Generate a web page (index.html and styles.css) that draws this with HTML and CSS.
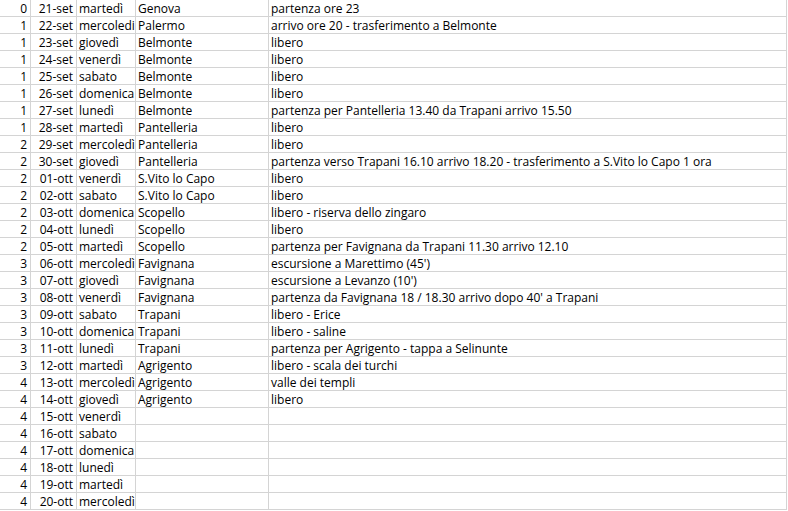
FILE: index.html
```html
<!DOCTYPE html>
<html lang="it">
<head>
<meta charset="utf-8">
<title>Itinerario</title>
<link rel="stylesheet" href="styles.css">
</head>
<body>
<div class="sheet">
<div class="row"><div class="c n">0</div><div class="c d">21-set</div><div class="c t">martedì</div><div class="c t">Genova</div><div class="c t">partenza ore 23</div></div>
<div class="row"><div class="c n">1</div><div class="c d">22-set</div><div class="c t">mercoledi</div><div class="c t">Palermo</div><div class="c t">arrivo ore 20 - trasferimento a Belmonte</div></div>
<div class="row"><div class="c n">1</div><div class="c d">23-set</div><div class="c t">giovedì</div><div class="c t">Belmonte</div><div class="c t">libero</div></div>
<div class="row"><div class="c n">1</div><div class="c d">24-set</div><div class="c t">venerdì</div><div class="c t">Belmonte</div><div class="c t">libero</div></div>
<div class="row"><div class="c n">1</div><div class="c d">25-set</div><div class="c t">sabato</div><div class="c t">Belmonte</div><div class="c t">libero</div></div>
<div class="row"><div class="c n">1</div><div class="c d">26-set</div><div class="c t">domenica</div><div class="c t">Belmonte</div><div class="c t">libero</div></div>
<div class="row"><div class="c n">1</div><div class="c d">27-set</div><div class="c t">lunedì</div><div class="c t">Belmonte</div><div class="c t">partenza per Pantelleria 13.40 da Trapani arrivo 15.50</div></div>
<div class="row"><div class="c n">1</div><div class="c d">28-set</div><div class="c t">martedì</div><div class="c t">Pantelleria</div><div class="c t">libero</div></div>
<div class="row"><div class="c n">2</div><div class="c d">29-set</div><div class="c t">mercoledì</div><div class="c t">Pantelleria</div><div class="c t">libero</div></div>
<div class="row"><div class="c n">2</div><div class="c d">30-set</div><div class="c t">giovedì</div><div class="c t">Pantelleria</div><div class="c t">partenza verso Trapani 16.10 arrivo 18.20 - trasferimento a S.Vito lo Capo 1 ora</div></div>
<div class="row"><div class="c n">2</div><div class="c d">01-ott</div><div class="c t">venerdì</div><div class="c t">S.Vito lo Capo</div><div class="c t">libero</div></div>
<div class="row"><div class="c n">2</div><div class="c d">02-ott</div><div class="c t">sabato</div><div class="c t">S.Vito lo Capo</div><div class="c t">libero</div></div>
<div class="row"><div class="c n">2</div><div class="c d">03-ott</div><div class="c t">domenica</div><div class="c t">Scopello</div><div class="c t">libero - riserva dello zingaro</div></div>
<div class="row"><div class="c n">2</div><div class="c d">04-ott</div><div class="c t">lunedì</div><div class="c t">Scopello</div><div class="c t">libero</div></div>
<div class="row"><div class="c n">2</div><div class="c d">05-ott</div><div class="c t">martedì</div><div class="c t">Scopello</div><div class="c t">partenza per Favignana da Trapani 11.30 arrivo 12.10</div></div>
<div class="row"><div class="c n">3</div><div class="c d">06-ott</div><div class="c t">mercoledì</div><div class="c t">Favignana</div><div class="c t">escursione a Marettimo (45')</div></div>
<div class="row"><div class="c n">3</div><div class="c d">07-ott</div><div class="c t">giovedì</div><div class="c t">Favignana</div><div class="c t">escursione a Levanzo (10')</div></div>
<div class="row"><div class="c n">3</div><div class="c d">08-ott</div><div class="c t">venerdì</div><div class="c t">Favignana</div><div class="c t">partenza da Favignana 18 / 18.30 arrivo dopo 40' a Trapani</div></div>
<div class="row"><div class="c n">3</div><div class="c d">09-ott</div><div class="c t">sabato</div><div class="c t">Trapani</div><div class="c t">libero - Erice</div></div>
<div class="row"><div class="c n">3</div><div class="c d">10-ott</div><div class="c t">domenica</div><div class="c t">Trapani</div><div class="c t">libero - saline</div></div>
<div class="row"><div class="c n">3</div><div class="c d">11-ott</div><div class="c t">lunedì</div><div class="c t">Trapani</div><div class="c t">partenza per Agrigento - tappa a Selinunte</div></div>
<div class="row"><div class="c n">3</div><div class="c d">12-ott</div><div class="c t">martedì</div><div class="c t">Agrigento</div><div class="c t">libero - scala dei turchi</div></div>
<div class="row"><div class="c n">4</div><div class="c d">13-ott</div><div class="c t">mercoledì</div><div class="c t">Agrigento</div><div class="c t">valle dei templi</div></div>
<div class="row"><div class="c n">4</div><div class="c d">14-ott</div><div class="c t">giovedì</div><div class="c t">Agrigento</div><div class="c t">libero</div></div>
<div class="row"><div class="c n">4</div><div class="c d">15-ott</div><div class="c t">venerdì</div><div class="c t"></div><div class="c t"></div></div>
<div class="row"><div class="c n">4</div><div class="c d">16-ott</div><div class="c t">sabato</div><div class="c t"></div><div class="c t"></div></div>
<div class="row"><div class="c n">4</div><div class="c d">17-ott</div><div class="c t">domenica</div><div class="c t"></div><div class="c t"></div></div>
<div class="row"><div class="c n">4</div><div class="c d">18-ott</div><div class="c t">lunedì</div><div class="c t"></div><div class="c t"></div></div>
<div class="row"><div class="c n">4</div><div class="c d">19-ott</div><div class="c t">martedì</div><div class="c t"></div><div class="c t"></div></div>
<div class="row"><div class="c n">4</div><div class="c d">20-ott</div><div class="c t">mercoledì</div><div class="c t"></div><div class="c t"></div></div>
</div>
</body>
</html>
```
FILE: styles.css
```css
html, body {
  margin: 0;
  padding: 0;
  background: #ffffff;
}
.sheet {
  display: flex;
  flex-direction: column;
  width: 787px;
  font-family: "Open Sans", "Liberation Sans", sans-serif;
  font-size: 12px;
  color: #000000;
}
.row {
  display: grid;
  grid-template-columns: 31px 46px 59px 133px 518px;
  height: 17px;
}
.c {
  box-sizing: border-box;
  height: 17px;
  padding-top: 1px;
  border-right: 1px solid #d4d4d4;
  border-bottom: 1px solid #d4d4d4;
  line-height: 15px;
  white-space: nowrap;
  overflow: visible;
}
.n, .d {
  text-align: right;
  padding-right: 3px;
}
.t {
  text-align: left;
  padding-left: 2px;
}
```
